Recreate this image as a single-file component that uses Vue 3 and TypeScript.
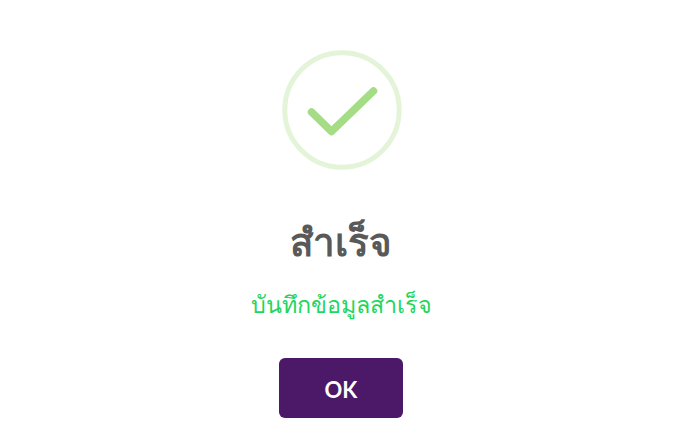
<script setup lang="ts">
const title = 'สำเร็จ'
const message = 'บันทึกข้อมูลสำเร็จ'
</script>

<template>
  <div class="page">
    <div class="dialog">
      <svg class="icon" width="120" height="120" viewBox="0 0 120 120" aria-hidden="true">
        <circle cx="60" cy="60" r="57.2" fill="none" stroke="#e4f4d9" stroke-width="5" />
        <path d="M29.5 62 L49.5 81.5 L91.5 41" fill="none" stroke="#a5dc86" stroke-width="7.5" stroke-linecap="round" stroke-linejoin="round" />
      </svg>
      <h2 class="title">{{ title }}</h2>
      <p class="message">{{ message }}</p>
      <button class="ok" type="button">OK</button>
    </div>
  </div>
</template>

<style scoped>
.page {
  width: 680px;
  height: 448px;
  background: #fff;
  overflow: hidden;
  font-family: Lato, "Noto Sans", sans-serif;
}
.dialog {
  display: flex;
  flex-direction: column;
  align-items: center;
  padding-top: 50px;
  padding-left: 2px;
}
.icon {
  display: block;
  margin-left: 1px;
}
.title {
  margin: 44px 0 0;
  font-size: 38.5px;
  line-height: 54px;
  font-weight: 800;
  color: #595959;
}
.message {
  margin: 19px 0 0;
  font-size: 23.3px;
  line-height: 34px;
  font-weight: 400;
  color: #1fd65f;
}
.ok {
  margin-top: 37px;
  width: 124px;
  height: 60px;
  padding: 2px 0 0;
  border: 0;
  border-radius: 6px;
  background: #4c1868;
  color: #fff;
  font-family: inherit;
  font-size: 22px;
  font-weight: 700;
}
</style>
